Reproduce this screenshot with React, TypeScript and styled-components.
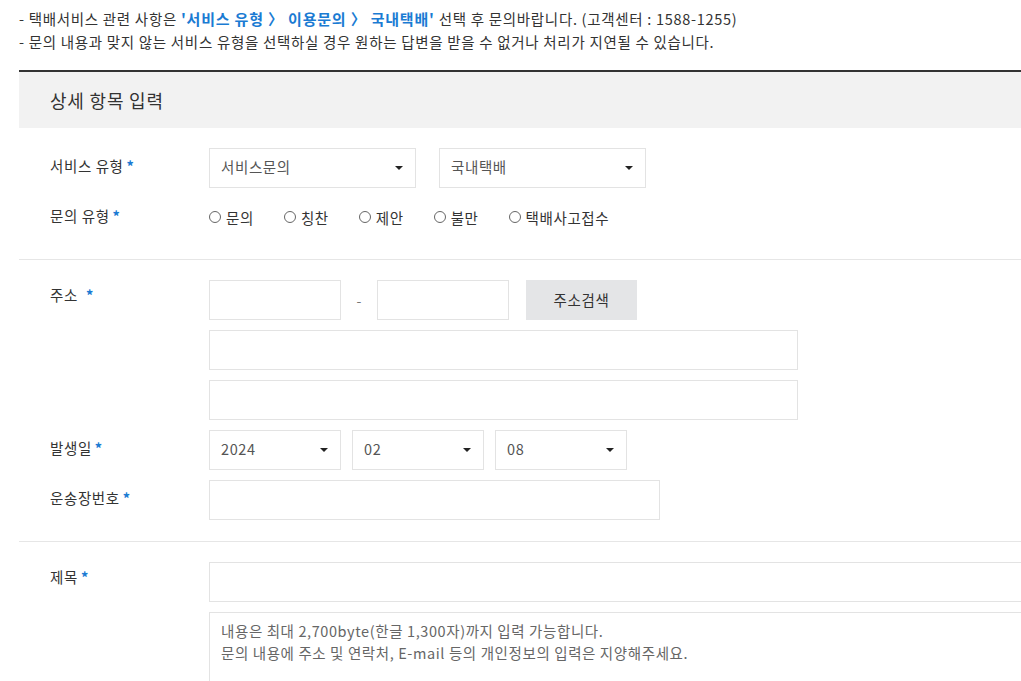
import React from "react";
import styled, { createGlobalStyle } from "styled-components";

const Global = createGlobalStyle`
  html, body { margin: 0; padding: 0; background: #fff; overflow: hidden; }
  body { font-family: "Noto Sans CJK KR", "Noto Sans", sans-serif; color: #333; }
  * { box-sizing: border-box; }
`;

const Page = styled.div`
  width: 1100px;
  padding: 7px 0 0 19px;
`;

const Notice = styled.ul`
  list-style: none;
  margin: 0;
  padding: 0;
  font-size: 14.5px;
  line-height: 23px;
  color: #333;
  letter-spacing: 0.7px;
`;

const Em = styled.strong`
  color: #1a7bd3;
  font-weight: 700;
  font-size: 15px;
  letter-spacing: 0.8px;
`;

const Form = styled.div`
  margin-top: 17px;
  border-top: 2px solid #333;
`;

const Head = styled.div`
  height: 56px;
  background: #f2f2f2;
  display: flex;
  align-items: center;
  padding-left: 31px;
  font-size: 18px;
  letter-spacing: 0.8px;
  color: #333;
`;

const Section = styled.div<{ $last?: boolean }>`
  display: flex;
  flex-direction: column;
  gap: 10px;
  padding: 20px 0 21px;
  border-bottom: ${(p) => (p.$last ? "none" : "1px solid #e6e6e6")};
`;

const Row = styled.div<{ $top?: boolean }>`
  display: grid;
  grid-template-columns: 190px 1fr;
  align-items: ${(p) => (p.$top ? "start" : "center")};
  min-height: 40px;
`;

const Label = styled.div<{ $top?: boolean }>`
  padding-left: 31px;
  font-size: 14.5px;
  letter-spacing: 0.6px;
  color: #333;
  line-height: 20px;
  padding-top: ${(p) => (p.$top ? "5px" : "0")};
  margin-top: ${(p) => (p.$top ? "0" : "-4px")};
`;

const Star = styled.span<{ $gap?: boolean }>`
  color: #1a7bd3;
  margin-left: ${(p) => (p.$gap ? "8px" : "3px")};
  font-size: 14.5px;
  font-weight: 700;
`;

const Fields = styled.div<{ $col?: boolean }>`
  display: flex;
  flex-direction: ${(p) => (p.$col ? "column" : "row")};
  align-items: ${(p) => (p.$col ? "flex-start" : "center")};
  gap: 10px;
`;

const SelectBox = styled.div<{ $w: number; $gap?: number }>`
  width: ${(p) => p.$w}px;
  height: 40px;
  border: 1px solid #e3e3e3;
  display: flex;
  align-items: center;
  justify-content: space-between;
  padding: 0 12px 3px 11px;
  font-size: 14.5px;
  letter-spacing: 0.6px;
  color: #555;
  margin-right: ${(p) => p.$gap ?? 0}px;
`;

const Caret = styled.span`
  width: 0;
  height: 0;
  margin-top: 3px;
  border-left: 4px solid transparent;
  border-right: 4px solid transparent;
  border-top: 4px solid #222;
`;

const Input = styled.div<{ $w: string }>`
  width: ${(p) => p.$w};
  height: 40px;
  border: 1px solid #e3e3e3;
  background: #fff;
`;

const Dash = styled.span`
  width: 36px;
  text-align: center;
  color: #777;
  font-size: 14px;
  margin: 0 -10px;
`;

const Button = styled.div`
  width: 111px;
  height: 40px;
  background: #e4e5e7;
  display: flex;
  align-items: center;
  justify-content: center;
  padding-bottom: 2px;
  font-size: 14.5px;
  letter-spacing: 0.6px;
  color: #333;
  margin-left: 7px;
`;

const Radios = styled.div`
  display: flex;
  align-items: center;
  gap: 30px;
  font-size: 14.5px;
  letter-spacing: 0.6px;
  color: #333;
  margin-top: -2px;
`;

const Radio = styled.label`
  display: flex;
  align-items: center;
  gap: 5px;
`;

const Circle = styled.span`
  width: 12px;
  height: 12px;
  border: 1px solid #666;
  border-radius: 50%;
  display: inline-block;
`;

const TextArea = styled.div`
  width: 100%;
  height: 120px;
  border: 1px solid #e3e3e3;
  padding: 7px 11px;
  font-size: 14.5px;
  letter-spacing: 0.6px;
  line-height: 22px;
  color: #666;
`;

export default function App() {
  return (
    <>
      <Global />
      <Page>
        <Notice>
          <li>
            - 택배서비스 관련 사항은 <Em>'서비스 유형 〉 이용문의 〉 국내택배'</Em> 선택 후 문의바랍니다. (고객센터 : 1588-1255)
          </li>
          <li>- 문의 내용과 맞지 않는 서비스 유형을 선택하실 경우 원하는 답변을 받을 수 없거나 처리가 지연될 수 있습니다.</li>
        </Notice>
        <Form>
          <Head>상세 항목 입력</Head>
          <Section>
            <Row>
              <Label>
                서비스 유형<Star>*</Star>
              </Label>
              <Fields>
                <SelectBox $w={207} $gap={13}>
                  서비스문의
                  <Caret />
                </SelectBox>
                <SelectBox $w={207}>
                  국내택배
                  <Caret />
                </SelectBox>
              </Fields>
            </Row>
            <Row>
              <Label>
                문의 유형<Star>*</Star>
              </Label>
              <Radios>
                {["문의", "칭찬", "제안", "불만", "택배사고접수"].map((t) => (
                  <Radio key={t}>
                    <Circle />
                    {t}
                  </Radio>
                ))}
              </Radios>
            </Row>
          </Section>
          <Section>
            <Row $top>
              <Label $top>
                주소<Star $gap>*</Star>
              </Label>
              <Fields $col>
                <Fields>
                  <Input $w="132px" />
                  <Dash>-</Dash>
                  <Input $w="132px" />
                  <Button>주소검색</Button>
                </Fields>
                <Input $w="589px" />
                <Input $w="589px" />
              </Fields>
            </Row>
            <Row>
              <Label>
                발생일<Star>*</Star>
              </Label>
              <Fields>
                <SelectBox $w={132} $gap={1}>
                  2024
                  <Caret />
                </SelectBox>
                <SelectBox $w={132} $gap={1}>
                  02
                  <Caret />
                </SelectBox>
                <SelectBox $w={132}>
                  08
                  <Caret />
                </SelectBox>
              </Fields>
            </Row>
            <Row>
              <Label>
                운송장번호<Star>*</Star>
              </Label>
              <Fields>
                <Input $w="451px" />
              </Fields>
            </Row>
          </Section>
          <Section $last>
            <Row $top>
              <Label $top>
                제목<Star>*</Star>
              </Label>
              <Fields $col>
                <Input $w="100%" />
                <TextArea>
                  내용은 최대 2,700byte(한글 1,300자)까지 입력 가능합니다.
                  <br />
                  문의 내용에 주소 및 연락처, E-mail 등의 개인정보의 입력은 지양해주세요.
                </TextArea>
              </Fields>
            </Row>
          </Section>
        </Form>
      </Page>
    </>
  );
}
